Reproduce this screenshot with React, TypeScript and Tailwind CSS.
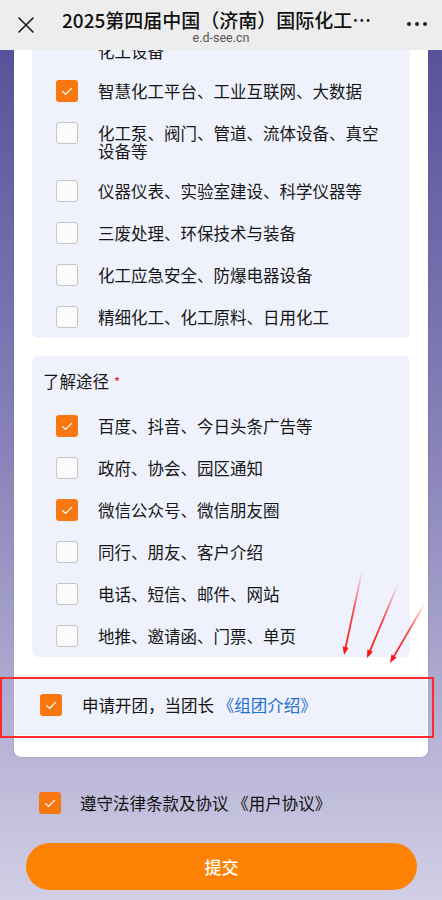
import React from "react";

const cjk = "font-['Noto_Sans_CJK_SC','Noto_Sans',sans-serif]";

const industryItems = [
  { label: "化工机械、压力容器、分离干燥设备、\n化工设备", checked: false },
  { label: "智慧化工平台、工业互联网、大数据", checked: true },
  { label: "化工泵、阀门、管道、流体设备、真空设备等", checked: false },
  { label: "仪器仪表、实验室建设、科学仪器等", checked: false },
  { label: "三废处理、环保技术与装备", checked: false },
  { label: "化工应急安全、防爆电器设备", checked: false },
  { label: "精细化工、化工原料、日用化工", checked: false },
];

const channelItems = [
  { label: "百度、抖音、今日头条广告等", checked: true },
  { label: "政府、协会、园区通知", checked: false },
  { label: "微信公众号、微信朋友圈", checked: true },
  { label: "同行、朋友、客户介绍", checked: false },
  { label: "电话、短信、邮件、网站", checked: false },
  { label: "地推、邀请函、门票、单页", checked: false },
];

// hand-drawn annotation arrows, [fromX, fromY, toX, toY]
const arrows = [
  [362, 571, 344, 655],
  [398, 584, 367, 658],
  [425, 603, 390, 663],
];

function Checkbox({ checked }: { checked: boolean }) {
  if (checked) {
    return (
      <span className="flex h-[22px] w-[22px] shrink-0 items-center justify-center rounded-[3px] bg-[#f8770f]">
        <svg width="22" height="22" viewBox="0 0 22 22">
          <path d="M6.5 11.6 L9.6 14.3 L15.6 8.4" fill="none" stroke="#fff" strokeWidth="1.2" strokeLinecap="round" strokeLinejoin="round" />
        </svg>
      </span>
    );
  }
  return <span className="h-[22px] w-[22px] shrink-0 rounded-[3px] border border-[#c4c4ca] bg-[#fbfbfc]" />;
}

function OptionRow({ label, checked }: { label: string; checked: boolean }) {
  return (
    <div className="flex items-start gap-[20px] py-[10px]">
      <Checkbox checked={checked} />
      <span className="whitespace-pre-line pt-[2px] text-[16.5px] leading-[18px] text-[#161616]">{label}</span>
    </div>
  );
}

function Arrows() {
  return (
    <svg className="pointer-events-none absolute left-0 top-0" width="442" height="900">
      <defs>
        {arrows.map(([x1, y1, x2, y2], i) => (
          <linearGradient key={i} id={`fade${i}`} gradientUnits="userSpaceOnUse" x1={x1} y1={y1} x2={x2} y2={y2}>
            <stop offset="0" stopColor="#ff2020" stopOpacity="0" />
            <stop offset="0.45" stopColor="#ff2020" stopOpacity="0.8" />
            <stop offset="1" stopColor="#ff1010" stopOpacity="1" />
          </linearGradient>
        ))}
      </defs>
      {arrows.map(([x1, y1, x2, y2], i) => {
        const len = Math.hypot(x2 - x1, y2 - y1);
        const ux = (x2 - x1) / len;
        const uy = (y2 - y1) / len;
        const bx = x2 - ux * 8;
        const by = y2 - uy * 8;
        const px = -uy * 3;
        const py = ux * 3;
        return (
          <g key={i}>
            <line x1={x1} y1={y1} x2={bx} y2={by} stroke={`url(#fade${i})`} strokeWidth="1.8" strokeLinecap="round" />
            <polygon points={`${x2},${y2} ${bx + px},${by + py} ${bx - px},${by - py}`} fill="#ff1010" />
          </g>
        );
      })}
    </svg>
  );
}

export default function App() {
  return (
    <div className={`relative flex h-[900px] w-[442px] flex-col overflow-hidden ${cjk}`}>
      <div className="relative z-10 flex h-[50px] shrink-0 items-start bg-[#ededed]">
        <div className="flex h-[50px] w-[50px] items-center justify-center pl-[2px]">
          <svg width="16" height="16" viewBox="0 0 16 16">
            <path d="M1 1 L15 15 M15 1 L1 15" stroke="#1a1a1a" strokeWidth="1.6" strokeLinecap="round" />
          </svg>
        </div>
        <div className="flex min-w-0 flex-1 flex-col items-center pt-[9px]">
          <div className="w-[318px] truncate text-center text-[19px] font-medium leading-[22px] text-[#111]">
            2025第四届中国（济南）国际化工装备博览会
          </div>
          <div className="font-['Roboto','Noto_Sans',sans-serif] text-[12.5px] leading-[14px] text-[#555]">e.d-see.cn</div>
        </div>
        <div className="flex h-[50px] w-[50px] items-center justify-center gap-[4px] pb-[2px] pr-[1px]">
          <span className="h-[4px] w-[4px] rounded-full bg-[#222]" />
          <span className="h-[4px] w-[4px] rounded-full bg-[#222]" />
          <span className="h-[4px] w-[4px] rounded-full bg-[#222]" />
        </div>
      </div>

      <div className="flex-1 overflow-hidden bg-gradient-to-b from-[#58539a] via-[#8c86bb] to-[#d1cfe5]">
        <div className="mx-[14px] -mt-[38px] rounded-b-[7px] bg-white px-[18px] pb-[22px] shadow-[0_0_1px_rgba(40,30,90,0.5)]">
          <div className="rounded-b-[6px] bg-[#eff2fd] pl-[24px] pr-[20px]">
            {industryItems.map((item) => (
              <OptionRow key={item.label} label={item.label} checked={item.checked} />
            ))}
          </div>

          <div className="mt-[18px] rounded-[6px] bg-[#eff2fd] pl-[24px] pr-[20px] pt-[16px]">
            <div className="mb-[14px] -ml-[13px] flex items-center text-[16.5px] leading-[19px] text-[#161616]">
              了解途径
              <span className="ml-[5px] text-[13px] leading-[13px] text-[#e02020]">*</span>
            </div>
            {channelItems.map((item) => (
              <OptionRow key={item.label} label={item.label} checked={item.checked} />
            ))}
          </div>

          <div className="-mx-[17px] mt-[18px] flex h-[60px] items-center gap-[20px] bg-[#eff1fc] pl-[25px]">
            <Checkbox checked />
            <span className="text-[16.5px] leading-[19px] text-[#161616]">
              申请开团，当团长 <span className="text-[#1d6fd2]">《组团介绍》</span>
            </span>
          </div>
        </div>

        <div className="ml-[39px] mt-[35px] flex h-[22px] items-center gap-[19px]">
          <Checkbox checked />
          <span className="text-[16.5px] leading-[19px] text-[#111]">遵守法律条款及协议 《用户协议》</span>
        </div>

        <button className="mx-[26px] mt-[29px] flex h-[47px] w-[391px] items-center justify-center rounded-full bg-[#fe8203] text-[17px] font-medium text-white">
          提交
        </button>
      </div>

      <div className="pointer-events-none absolute left-0 top-[677px] h-[61px] w-[434px] border-2 border-[#ff2a2a]" />
      <Arrows />
    </div>
  );
}
